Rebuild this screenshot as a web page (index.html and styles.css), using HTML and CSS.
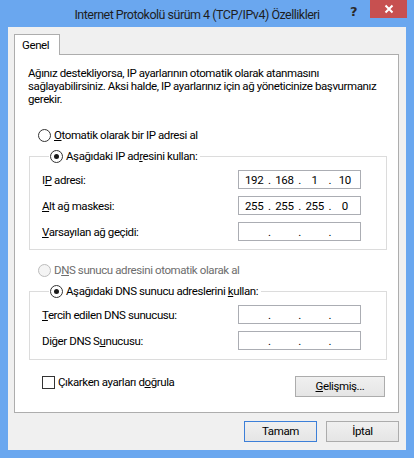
FILE: index.html
```html
<html>
<head>
<link rel="stylesheet" href="styles.css">
</head>
<body>
<div class="window">
	<div class="titlebar">
		<div class="title">Internet Protokolü sürüm 4 (TCP/IPv4) Özellikleri</div>
		<div class="help">?</div>
		<div class="close">
			<svg width="10" height="10" viewBox="0 0 10 10"><path d="M1.5 1.5 L8.5 8.5 M8.5 1.5 L1.5 8.5" stroke="#fff" stroke-width="2"/></svg>
		</div>
	</div>
	<div class="client">
		<div class="tabs">
			<div class="tab">Genel</div>
		</div>
		<div class="panel">
			<div class="intro">Ağınız destekliyorsa, IP ayarlarının otomatik olarak atanmasını<br>sağlayabilirsiniz. Aksi halde, IP ayarlarınız için ağ yöneticinize başvurmanız<br>gerekir.</div>

			<div class="option first"><span class="radio"></span><span><u>O</u>tomatik olarak bir IP adresi al</span></div>
			<fieldset class="group">
				<legend><span class="radio on"></span><span>Aşağıdaki IP ad<u>r</u>esini kullan:</span></legend>
				<div class="row">
					<span>I<u>P</u> adresi:</span>
					<div class="ip"><span>192</span><i>.</i><span>168</span><i>.</i><span>1</span><i>.</i><span>10</span></div>
				</div>
				<div class="row">
					<span><u>A</u>lt ağ maskesi:</span>
					<div class="ip"><span>255</span><i>.</i><span>255</span><i>.</i><span>255</span><i>.</i><span>0</span></div>
				</div>
				<div class="row">
					<span><u>V</u>arsayılan ağ geçidi:</span>
					<div class="ip"><span></span><i>.</i><span></span><i>.</i><span></span><i>.</i><span></span></div>
				</div>
			</fieldset>

			<div class="option disabled"><span class="radio off"></span><span>D<u>N</u>S sunucu adresini otomatik olarak al</span></div>
			<fieldset class="group dns">
				<legend><span class="radio on"></span><span>Aşağıdaki DNS sunucu adreslerini <u>k</u>ullan:</span></legend>
				<div class="row">
					<span><u>T</u>ercih edilen DNS sunucusu:</span>
					<div class="ip"><span></span><i>.</i><span></span><i>.</i><span></span><i>.</i><span></span></div>
				</div>
				<div class="row">
					<span>Diğer DNS S<u>u</u>nucusu:</span>
					<div class="ip"><span></span><i>.</i><span></span><i>.</i><span></span><i>.</i><span></span></div>
				</div>
			</fieldset>

			<div class="bottom">
				<div class="check"><span class="box"></span><span>Çıkarken ayarları d<u>o</u>ğrula</span></div>
				<div class="button advanced"><u>G</u>elişmiş...</div>
			</div>
		</div>
		<div class="buttons">
			<div class="button default">Tamam</div>
			<div class="button">İptal</div>
		</div>
	</div>
</div>
</body>
</html>
```

FILE: styles.css
```css
body
{
margin:0;
font-family:Roboto, "Noto Sans", sans-serif;
font-size:11.5px;
letter-spacing:-0.4px;
color:#000;
}
.window
{
width:414px;
height:458px;
box-sizing:border-box;
background-color:#6aa7ef;
padding:0 8px 8px 8px;
display:flex;
flex-direction:column;
}
.titlebar
{
height:27px;
display:flex;
align-items:flex-start;
}
.title
{
flex:1;
text-align:center;
font-size:12.5px;
letter-spacing:-0.5px;
line-height:29px;
color:#1e1e1e;
padding-left:36px;
white-space:nowrap;
}
.help
{
font-family:"DejaVu Sans", sans-serif;
font-weight:bold;
font-size:13px;
color:#2a2a2a;
line-height:24px;
width:16px;
margin-right:4px;
}
.close
{
width:37px;
height:18px;
margin-right:-1px;
background-color:#c75050;
display:flex;
align-items:center;
justify-content:center;
}
.client
{
flex:1;
background-color:#f0f0f0;
padding:7px 7px 0 6px;
}
.tabs
{
display:flex;
height:20px;
}
.tab
{
width:46px;
box-sizing:border-box;
background-color:#fff;
border:1px solid #adadad;
border-bottom:none;
padding:3px 0 0 7px;
line-height:15px;
position:relative;
z-index:1;
margin-bottom:-1px;
height:21px;
}
.panel
{
height:359px;
box-sizing:border-box;
background-color:#fff;
border:1px solid #adadad;
padding:12px 11px 0 13px;
}
.intro
{
line-height:13px;
white-space:nowrap;
}
.option
{
display:flex;
align-items:center;
height:16px;
padding-left:10px;
white-space:nowrap;
}
.option.first
{
margin-top:21px;
}
.option.disabled
{
margin-top:12px;
color:#6d6d6d;
}
.radio
{
width:13px;
height:13px;
box-sizing:border-box;
border:1px solid #333;
border-radius:50%;
background-color:#fff;
margin-right:3px;
display:inline-flex;
align-items:center;
justify-content:center;
flex:none;
}
.radio.on::after
{
content:"";
width:5px;
height:5px;
border-radius:50%;
background-color:#1a1a1a;
}
.radio.off
{
border-color:#bcbcbc;
background-color:#f4f4f4;
}
.group
{
margin:5px 0 0 1px;
padding:6px 25px 8px 12px;
border:1px solid #dcdcdc;
min-width:0;
}
.group legend
{
display:flex;
align-items:center;
height:16px;
padding:0 3px 0 1px;
margin-left:7px;
white-space:nowrap;
}
.group.dns
{
padding-bottom:9px;
}
.row
{
display:flex;
justify-content:space-between;
align-items:center;
height:19px;
}
.row + .row
{
margin-top:7px;
}
.ip
{
width:123px;
height:19px;
box-sizing:border-box;
border:1px solid #abadb3;
display:grid;
grid-template-columns:1fr 0 1fr 0 1fr 0 1fr;
align-items:center;
text-align:center;
}
.ip i
{
font-style:normal;
display:flex;
justify-content:center;
}
.bottom
{
display:flex;
justify-content:space-between;
align-items:flex-start;
margin-top:15px;
padding-left:14px;
padding-right:2px;
}
.check
{
display:flex;
align-items:center;
height:14px;
}
.box
{
width:13px;
height:13px;
box-sizing:border-box;
border:1px solid #333;
background-color:#fff;
margin-right:3px;
}
.button
{
width:73px;
height:21px;
box-sizing:border-box;
border:1px solid #acacac;
background:linear-gradient(#f0f0f0, #e5e5e5);
text-align:center;
line-height:19px;
}
.button.advanced
{
width:90px;
margin-top:1px;
}
.button.default
{
border-color:#3c7fd8;
}
.buttons
{
display:flex;
justify-content:flex-end;
gap:9px;
margin-top:8px;
}
```
